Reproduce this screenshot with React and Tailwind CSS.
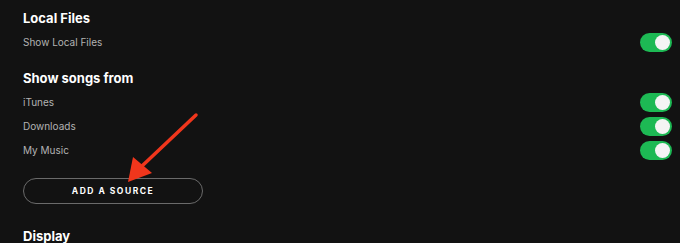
import React from 'react'

const Toggle = () => (
  <div className="relative w-[32px] h-[19px] rounded-full bg-[#1db954]">
    <div className="absolute right-[2px] top-[2px] w-[15px] h-[15px] rounded-full bg-[#f4f4f4]" />
  </div>
)

const Row = ({ label }) => (
  <div className="h-[24px] flex items-center justify-between">
    <span className="text-[10px] text-[#b3b3b3]">{label}</span>
    <Toggle />
  </div>
)

export default function App() {
  return (
    <div
      className="relative w-[680px] h-[243px] overflow-hidden bg-[#121212] pl-[23px] pr-[8px]"
      style={{ fontFamily: 'Inter, "Noto Sans", sans-serif' }}
    >
      {/* Local Files */}
      <div className="pt-[8px] h-[28px] leading-[20px] text-[13px] font-bold text-white">Local Files</div>
      <div className="mt-[2px]">
        <Row label="Show Local Files" />
      </div>

      {/* Show songs from */}
      <div className="mt-[14px] h-[20px] leading-[20px] text-[13px] font-bold text-white">Show songs from</div>
      <div className="mt-[2px]">
        <Row label="iTunes" />
        <Row label="Downloads" />
        <Row label="My Music" />
      </div>

      <button className="mt-[16px] w-[180px] h-[26px] rounded-full border border-[#6a6a6a] text-white text-[8.5px] font-bold tracking-[1.5px] flex items-center justify-center">
        ADD A SOURCE
      </button>

      <div className="mt-[22px] h-[20px] leading-[20px] text-[13px] font-bold text-white">Display</div>

      {/* annotation arrow */}
      <svg className="absolute left-0 top-0 pointer-events-none" width="680" height="243" viewBox="0 0 680 243">
        <line x1="196" y1="115" x2="142" y2="166" stroke="#f0361c" strokeWidth="3.5" strokeLinecap="round" />
        <polygon points="128,182 133,157 152,173" fill="#f0361c" />
      </svg>
    </div>
  )
}
